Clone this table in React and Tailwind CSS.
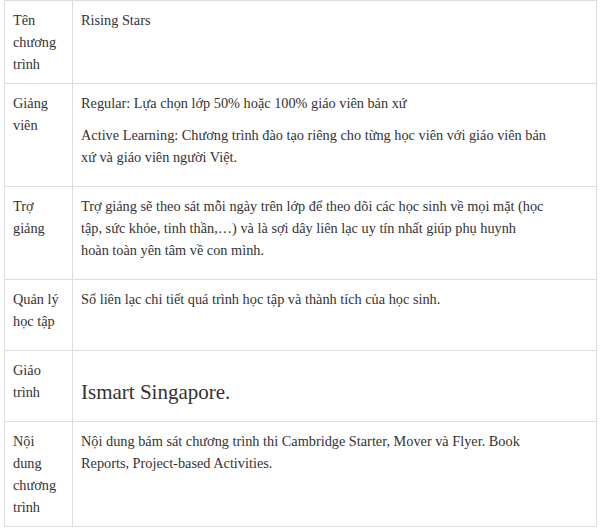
import React from 'react';

// line breaks follow the original page's wrapping
const rows = [
  {
    label: <>Tên chương trình</>,
    body: <>Rising Stars</>,
  },
  {
    label: <>Giảng viên</>,
    body: (
      <>
        <p className="mb-[10px]">Regular: Lựa chọn lớp 50% hoặc 100% giáo viên bản xứ</p>
        <p className="mb-[10px]">
          Active Learning: Chương trình đào tạo riêng cho từng học viên với giáo viên bản
          <br />
          xứ và giáo viên người Việt.
        </p>
      </>
    ),
  },
  {
    label: <>Trợ giảng</>,
    body: (
      <p className="mb-[10px]">
        Trợ giảng sẽ theo sát mỗi ngày trên lớp để theo dõi các học sinh về mọi mặt (học
        <br />
        tập, sức khỏe, tinh thần,…) và là sợi dây liên lạc uy tín nhất giúp phụ huynh
        <br />
        hoàn toàn yên tâm về con mình.
      </p>
    ),
  },
  {
    label: <p className="mb-[10px]">Quản lý học tập</p>,
    body: <p className="mb-[10px]">Sổ liên lạc chi tiết quá trình học tập và thành tích của học sinh.</p>,
  },
  {
    label: <p className="mb-[10px]">Giáo trình</p>,
    body: <p className="mt-[18px] text-[21px] leading-[30px]">Ismart Singapore.</p>,
  },
  {
    label: <>Nội dung chương trình</>,
    body: (
      <p className="mb-[10px]">
        Nội dung bám sát chương trình thi Cambridge Starter, Mover và Flyer. Book
        <br />
        Reports, Project-based Activities.
      </p>
    ),
  },
];

export default function App() {
  return (
    <div className="min-h-[530px] bg-white pl-[4px] [font-family:'Liberation_Serif','Times_New_Roman',serif] text-[14.3px] leading-[22px] text-[#333]">
      <table className="w-[593px] table-fixed border-collapse">
        <colgroup>
          <col className="w-[68px]" />
          <col />
        </colgroup>
        <tbody>
          {rows.map((row, i) => (
            <tr key={i}>
              <td className="border border-[#dddddd] px-2 pt-2 pb-2 align-top">{row.label}</td>
              <td className="border border-[#dddddd] px-2 pt-2 pb-2 align-top">{row.body}</td>
            </tr>
          ))}
        </tbody>
      </table>
    </div>
  );
}
